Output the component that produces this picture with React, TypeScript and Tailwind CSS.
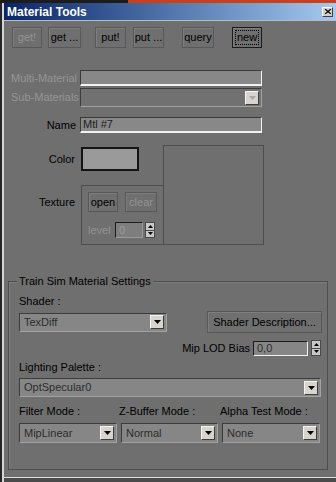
import type { ReactNode } from 'react'

function ToolButton({
  children,
  className = '',
  disabled = false,
  focused = false
}: {
  children: ReactNode
  className?: string
  disabled?: boolean
  focused?: boolean
}) {
  return (
    <div
      className={`h-[21px] flex items-stretch border shadow-[inset_1px_1px_0_#7e7e7e] ${
        focused ? 'border-[#1a1a1a] p-[2px]' : 'border-[#585858]'
      } ${disabled ? 'text-[#939393]' : 'text-black'} ${className}`}
    >
      <div className={`flex-1 flex items-center justify-center ${focused ? 'border border-dotted border-black' : ''}`}>
        {children}
      </div>
    </div>
  )
}

function DropArrow({ disabled = false }: { disabled?: boolean }) {
  return (
    <div className="w-[14px] h-[14px] shrink-0 bg-[#d7d4cd] border border-t-[#f4f4f4] border-l-[#f4f4f4] border-b-[#3e3e3e] border-r-[#3e3e3e] flex items-center justify-center">
      <svg width="7" height="4" viewBox="0 0 7 4">
        <path d="M0 0h7L3.5 4z" fill={disabled ? '#a8a8a8' : '#000'} />
      </svg>
    </div>
  )
}

function Combo({ value = '', className = '', disabled = false }: { value?: string; className?: string; disabled?: boolean }) {
  return (
    <div
      className={`flex items-center pl-[4px] pr-[2px] border border-t-[#3c3c3c] border-l-[#3c3c3c] border-b-[#a2a2a2] border-r-[#a2a2a2] ${
        disabled ? 'bg-[#717171]' : 'bg-[#868686]'
      } ${className}`}
    >
      <span className="flex-1 truncate text-[#2c2c2c]">{value}</span>
      <DropArrow disabled={disabled} />
    </div>
  )
}

function Field({ value = '', className = '' }: { value?: string; className?: string }) {
  return (
    <div
      className={`flex items-center pl-[2px] bg-[#888888] border border-t-[#3a3a3a] border-l-[#3a3a3a] border-b-[#f2f2f2] border-r-[#f2f2f2] border-b-2 ${className}`}
    >
      <span className="text-[#1e1e1e]">{value}</span>
    </div>
  )
}

function Spin() {
  return (
    <div className="w-[10px] h-[16px] shrink-0 flex flex-col bg-[#c8c8c8] border border-[#4a4a4a]">
      <div className="flex-1 flex items-center justify-center">
        <svg width="5" height="3" viewBox="0 0 5 3">
          <path d="M2.5 0L5 3H0z" fill="#000" />
        </svg>
      </div>
      <div className="h-px bg-[#4a4a4a]" />
      <div className="flex-1 flex items-center justify-center">
        <svg width="5" height="3" viewBox="0 0 5 3">
          <path d="M0 0h5L2.5 3z" fill="#000" />
        </svg>
      </div>
    </div>
  )
}

export default function App() {
  return (
    <div className="w-[336px] h-[482px] overflow-hidden bg-[#6f6f6f] flex flex-col text-[11px] leading-[13px] text-black font-['Liberation_Sans',Arial,sans-serif]">
      {/* desktop strip above window */}
      <div className="h-[3px] flex shrink-0">
        <div className="w-[128px] bg-[#1c1c1c]" />
        <div className="flex-1 bg-[#c6421e]" />
      </div>

      <div className="flex-1 flex min-h-0">
        {/* left frame */}
        <div className="w-[4px] flex shrink-0">
          <div className="w-[2px] bg-[#262626]" />
          <div className="w-[2px] bg-[#d6d6d6]" />
        </div>

        <div className="flex-1 flex flex-col">
          {/* Title bar */}
          <div className="h-[17px] shrink-0 flex items-center pl-[3px] pr-[3px] bg-gradient-to-r from-[#0a246a] to-[#a6caf0]">
            <span className="flex-1 text-white font-bold text-[12px] leading-[14px]">Material Tools</span>
            <div className="w-[11px] h-[10px] bg-[#d4d0c8] border border-t-white border-l-white border-b-[#404040] border-r-[#404040] flex items-center justify-center">
              <svg width="6" height="5" viewBox="0 0 6 5">
                <path d="M0 0L6 5M6 0L0 5" stroke="#000" strokeWidth="1.2" />
              </svg>
            </div>
          </div>
          <div className="h-px bg-[#bcbcbc] shrink-0" />

          {/* Tool buttons */}
          <div className="mt-[6px] flex">
            <ToolButton disabled className="ml-[8px] w-[30px]">get!</ToolButton>
            <ToolButton className="ml-[6px] w-[33px]">get ...</ToolButton>
            <ToolButton className="ml-[14px] w-[31px]">put!</ToolButton>
            <ToolButton className="ml-[7px] w-[31px]">put ...</ToolButton>
            <ToolButton className="ml-[18px] w-[32px]">query</ToolButton>
            <ToolButton focused className="ml-[18px] w-[30px]">new</ToolButton>
          </div>

          {/* Multi-material rows */}
          <div className="mt-[22px] flex items-center h-[16px]">
            <span className="w-[76px] pl-[7px] text-[#959595]">Multi-Material</span>
            <Field className="w-[182px] h-[16px]" />
          </div>
          <div className="mt-[2px] flex items-center h-[19px]">
            <span className="w-[76px] pl-[7px] text-[#959595]">Sub-Materials</span>
            <Combo disabled className="w-[182px] h-[19px]" />
          </div>
          <div className="mt-[10px] flex items-center h-[16px]">
            <span className="w-[76px] pr-[4px] text-right">Name</span>
            <Field value="Mtl #7" className="w-[182px] h-[16px]" />
          </div>

          {/* Color / texture / preview */}
          <div className="mt-[12px] flex">
            <div className="w-[159px] flex flex-col">
              <div className="mt-[2px] flex items-center">
                <span className="w-[77px] pr-[6px] text-right">Color</span>
                <div className="w-[58px] h-[24px] bg-[#9a9a9a] border-2 border-[#141414]" />
              </div>
              <div className="mt-[14px] flex">
                <span className="w-[77px] pr-[6px] pt-[11px] text-right">Texture</span>
                <div className="w-[82px] h-[60px] border border-r-0 border-[#4c4c4c] pl-[6px] pt-[6px] flex flex-col">
                  <div className="flex">
                    <ToolButton className="w-[30px] !h-[20px]">open</ToolButton>
                    <ToolButton disabled className="ml-[7px] w-[32px] !h-[20px]">clear</ToolButton>
                  </div>
                  <div className="mt-[10px] flex items-center">
                    <span className="w-[27px] text-[#929292]">level</span>
                    <div className="w-[28px] h-[16px] flex items-center pl-[3px] bg-[#7e7e7e] border border-t-[#1c1c1c] border-l-[#1c1c1c] border-b-[#9a9a9a] border-r-[#9a9a9a] text-[#9c9c9c]">
                      0
                    </div>
                    <div className="ml-[2px]">
                      <Spin />
                    </div>
                  </div>
                </div>
              </div>
            </div>
            <div className="w-[101px] h-[100px] border border-[#4c4c4c]" />
          </div>

          {/* Train Sim group */}
          <div className="mt-[36px] ml-[4px] w-[320px] h-[189px] border border-[#4e4e4e] shadow-[inset_1px_1px_0_#7c7c7c] flex flex-col">
            <span className="-mt-[7px] ml-[8px] px-[2px] w-fit bg-[#6f6f6f]">Train Sim Material Settings</span>

            <span className="mt-[7px] pl-[10px]">Shader :</span>
            <div className="mt-[3px] h-[22px] flex items-center pl-[10px] pr-[5px]">
              <Combo value="TexDiff" className="w-[148px] h-[19px]" />
              <ToolButton className="ml-auto w-[115px] !h-[22px]">Shader Description...</ToolButton>
            </div>

            <div className="mt-[7px] h-[16px] flex items-center justify-end pr-[6px]">
              <span className="mr-[3px]">Mip LOD Bias</span>
              <div className="w-[55px] h-[15px] flex items-center pl-[3px] bg-[#868686] border border-t-[#1c1c1c] border-l-[#1c1c1c] border-b-[#f0f0f0] border-r-[#f0f0f0] text-[#2e2e2e]">
                0,0
              </div>
              <div className="ml-[3px]">
                <Spin />
              </div>
            </div>

            <span className="mt-[5px] pl-[10px]">Lighting Palette :</span>
            <Combo value="OptSpecular0" className="mt-[4px] ml-[10px] w-[302px] h-[19px]" />

            <div className="mt-[8px] pl-[10px] flex">
              <span className="w-[100px]">Filter Mode :</span>
              <span className="w-[101px]">Z-Buffer Mode :</span>
              <span>Alpha Test Mode :</span>
            </div>
            <div className="mt-[5px] pl-[10px] flex gap-[4px]">
              <Combo value="MipLinear" className="w-[98px] h-[20px]" />
              <Combo value="Normal" className="w-[97px] h-[20px]" />
              <Combo value="None" className="w-[98px] h-[20px]" />
            </div>
          </div>

          <div className="mt-[7px] h-px bg-[#dedede] shrink-0" />
          <div className="flex-1 bg-[#4a4a4a]" />
        </div>
      </div>
    </div>
  )
}
